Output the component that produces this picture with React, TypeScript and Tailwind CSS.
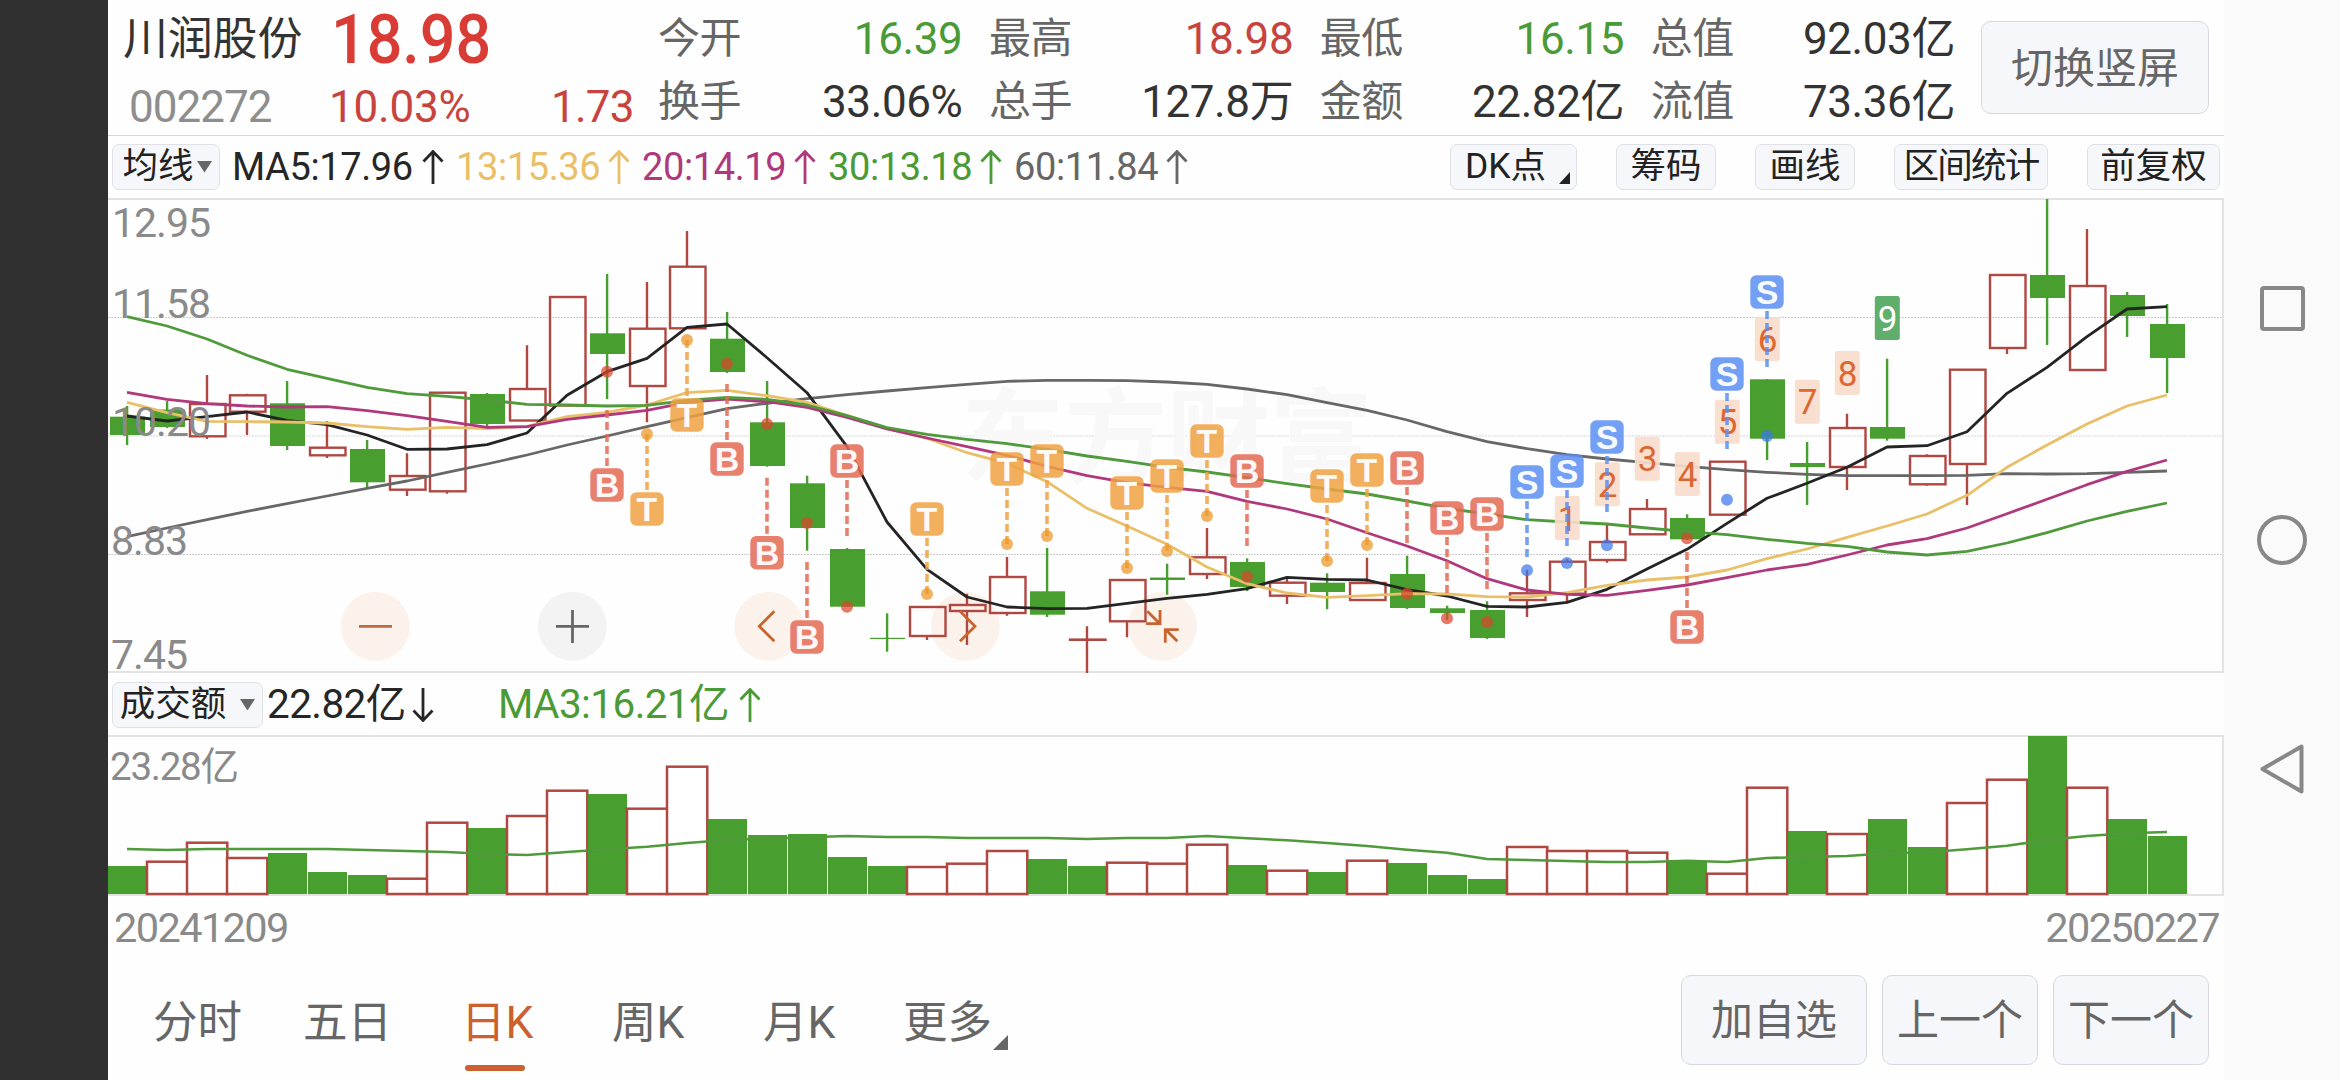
import React from "react";

type Candle = [kind: "g" | "r", high: number, top: number, bottom: number, low: number];

const cx = (i: number) => 127 + 40 * i;

const candles: Candle[] = [
  ["g", 406, 416.7, 435, 445], ["g", 401, 409.5, 427, 428], ["r", 375, 404, 436.3, 439], ["r", 393.7, 395.3, 411.7, 435],
  ["g", 381, 403.3, 446, 450], ["r", 421, 447.7, 455.3, 458], ["g", 440, 449, 482.3, 487.7], ["r", 453.3, 476, 489.7, 496],
  ["r", 392.3, 392.7, 491.3, 493.7], ["g", 393, 394, 424, 430], ["r", 345.3, 389, 420.5, 421], ["r", 297, 297, 405.5, 405.5],
  ["g", 274, 333.3, 354, 399], ["r", 282, 328.7, 386, 422.3], ["r", 231, 266.7, 328.3, 328.3], ["g", 312, 338.7, 372, 373],
  ["g", 381, 422.3, 466, 466.7], ["g", 475.7, 483.3, 528, 550.7], ["g", 548, 549, 606.7, 606.7], ["g", 613.3, 637.8, 639, 651.7],
  ["r", 606.5, 607, 636, 640], ["r", 593.7, 605, 611, 645], ["r", 557, 577, 613, 615.7], ["g", 548, 591.3, 614.7, 617],
  ["r", 626.3, 639.6, 639.8, 673], ["r", 580, 580, 621.3, 637.3], ["g", 563.7, 577.5, 580, 594.7], ["r", 528, 557.3, 574, 579],
  ["g", 558.3, 562, 587, 591], ["r", 578.3, 582.7, 595.7, 604], ["g", 573.3, 582.7, 592, 609.3], ["r", 557.7, 583, 600, 600],
  ["g", 555.7, 574, 608, 609], ["g", 605.7, 608.3, 613, 620], ["g", 601.3, 610, 638, 639], ["r", 570, 593.3, 600, 617],
  ["r", 559, 561.7, 593.7, 603.3], ["r", 525, 542, 560, 562.7], ["r", 499, 509, 534.3, 534.3], ["g", 514.3, 518, 539.3, 540],
  ["r", 461.7, 461.7, 514.7, 514.7], ["g", 379, 379.3, 438.7, 460], ["g", 442, 463, 467, 505], ["r", 413.7, 428, 467, 490],
  ["g", 358.7, 427, 438.7, 440.7], ["r", 454.3, 456, 484.3, 485.7], ["r", 369.7, 369.7, 464, 505], ["r", 275, 275, 348, 354],
  ["g", 199, 275, 298, 345], ["r", 229, 286, 370, 370], ["g", 292, 295, 316, 337], ["g", 304, 324, 358, 393],
];

const ma5 = [416, 421, 416.7, 412, 420.3, 424.7, 435, 449.3, 449, 444.7, 433, 395.3, 371.7, 358.3, 327.3, 324, 357.7, 392.7, 446.7, 522, 569.3, 597, 607, 608.7, 608.3, 603.3, 598.3, 594.3, 588.7, 577.3, 579.3, 580, 589.7, 596, 606.3, 607, 602.3, 589.3, 569, 549.3, 523.3, 498.3, 483.3, 467.2, 447, 445.7, 431.7, 393.3, 367.3, 336.7, 309, 306.7];
const ma13 = [402.3, 412.7, 421.3, 421.7, 422, 423, 426.7, 429.3, 427.3, 428.7, 426.3, 416.7, 412.3, 405, 392.7, 390.3, 395.7, 402.3, 415.7, 428.3, 438.3, 452.7, 463.3, 481.7, 508.3, 526, 544.3, 567, 583.7, 593, 597.3, 595.7, 593.7, 594, 596.7, 597, 592.7, 585.3, 580, 577, 570, 558.7, 549, 537.3, 526, 514, 495.3, 467.3, 445, 424, 406, 395];
const ma20 = [392.3, 399.3, 403.7, 406, 407, 406.7, 410.7, 415.7, 421.3, 427.3, 426.7, 419.3, 415, 410.3, 402.3, 399, 401.7, 407.3, 417.3, 429, 438, 446.7, 455.3, 466.3, 475.7, 482.7, 487.3, 491.3, 501.3, 509, 519, 532.7, 546, 560.7, 578.7, 590, 594.3, 595.3, 590.3, 585, 577.7, 570, 564.3, 555, 545, 538.7, 528, 513.7, 499.3, 484.7, 471.3, 460];
const ma30 = [316.7, 326, 339, 355.3, 369.3, 378.3, 387.3, 393.7, 396.3, 400, 404.3, 405, 406, 405.3, 400.3, 397.3, 399.3, 405, 415.7, 427.7, 434.3, 439.3, 443.7, 449.3, 456, 461.3, 467.3, 472, 477.7, 483.7, 489, 494, 501, 508.3, 514, 519.7, 522, 524, 528, 531.7, 534.7, 539.3, 543.3, 546.3, 552, 555, 551.3, 543, 532.7, 521, 511.3, 503];
const ma60 = [536.7, 528, 519.7, 511.3, 503.7, 496, 488.3, 481, 472.3, 464, 455, 445, 436, 426.7, 417.7, 408.7, 403.3, 398.7, 394.7, 391, 387.7, 384.3, 381.3, 380.3, 380.3, 380.7, 382, 384.3, 389, 394.7, 402.7, 410.3, 420, 431.7, 441.7, 448.7, 454.7, 459, 462.7, 466.3, 469.7, 472.3, 474.3, 475.7, 475.7, 475.7, 475.3, 473.7, 474, 473.7, 472.3, 471];

const volumeKinds = "grrrgggrrgrrgrrgggggrrrggrrrgrgrgggrrrrgrrgrggrrgrgg";
const volumeTops = [866, 861.7, 842.7, 858, 853, 872, 875, 878.7, 822.7, 828, 816, 790.7, 794, 808.7, 766.7, 819, 835, 834, 857, 866, 867, 863.7, 851, 859, 866, 862.7, 863.7, 844.7, 865, 870.7, 872, 860.7, 863, 875, 879, 847, 851, 851, 852.7, 862, 873.7, 787.7, 831, 834, 819, 847, 803, 779.7, 736, 787.7, 819, 836];
const volumeMa = [849, 850, 849, 849, 849, 849, 850, 851, 852, 854, 855, 852, 849.3, 846.7, 843, 840, 838.7, 837.3, 836, 837, 837, 838, 838, 838, 839, 838, 838, 836, 838.3, 840.3, 843, 846, 849.7, 852.7, 859, 860, 861, 862, 862, 860.7, 862, 858, 857, 856, 853.3, 852.3, 849.3, 845.7, 840, 836, 833.3, 832];

type Signal = [letter: "B" | "T" | "S", index: number, badgeY: number, dotY: number, below?: boolean];
const signals: Signal[] = [
  ["B", 12, 485, 371.7, true], ["T", 13, 509, 434, true], ["T", 14, 415, 340, true], ["B", 15, 459, 363.7, true],
  ["B", 16, 552.7, 424, true], ["B", 17, 637, 523, true], ["B", 18, 461, 606.7], ["T", 20, 519, 594], ["T", 22, 469, 544],
  ["T", 23, 461, 536], ["T", 25, 493, 568], ["T", 26, 476, 551], ["T", 27, 441, 516], ["B", 28, 471, 576.7],
  ["T", 30, 486, 561], ["T", 31, 470, 545], ["B", 32, 468, 593.7], ["B", 33, 518, 618.3], ["B", 34, 514, 622],
  ["S", 35, 482, 570.3], ["S", 36, 471, 563], ["S", 37, 437, 545.3], ["B", 39, 627, 538.3, true], ["S", 40, 374, 499.7],
  ["S", 41, 292, 436],
];
const signalColor = { B: "#e46a55", T: "#f0a243", S: "#5b8ff2" };
const dotColor = { B: "#dc452e", T: "#ec9526", S: "#3d77ea" };

const counts: [number, number, number][] = [
  [1, 36, 518], [2, 37, 484.3], [3, 38, 458.7], [4, 39, 474], [5, 40, 421.7], [6, 41, 339], [7, 42, 401.7], [8, 43, 373], [9, 44, 318],
];

const axis: [string, number, number][] = [
  ["12.95", 112, 236.7], ["11.58", 112, 317.5], ["10.20", 112, 436], ["8.83", 111, 555], ["7.45", 111, 669],
];

const points = (ys: number[]) => ys.map((y, i) => `${cx(i)},${y}`).join(" ");

function Line({ ys, color, width = 2.8 }: { ys: number[]; color: string; width?: number }) {
  return <polyline points={points(ys)} fill="none" stroke={color} strokeWidth={width} strokeLinejoin="round" />;
}

function PriceChart() {
  return (
    <svg className="block h-[476px] w-[2116px]" viewBox="108 198 2116 476">
      <path d="M108 317.5H2222M108 554.5H2222" stroke="#cdcdcd" strokeWidth="1" strokeDasharray="2 1" />
      <path d="M108 436H2222" stroke="#e4e4e4" strokeWidth="1.6" strokeDasharray="2 1" />
      <text x="961" y="475" fontSize="103" fontWeight="700" fill="#f8f8f8" textLength="412" fontFamily="'Noto Sans CJK SC'">东方财富</text>
      <circle cx="375.3" cy="626.3" r="34.5" fill="#fcf2ec" />
      <circle cx="572.3" cy="626.3" r="34.5" fill="#f3f3f3" />
      <circle cx="768.7" cy="626.3" r="34.5" fill="#fcf2ec" />
      <circle cx="965.5" cy="626.3" r="34.5" fill="#fcf2ec" />
      <circle cx="1162.5" cy="626.3" r="34.5" fill="#fcf2ec" />
      <path d="M108 199H2223V672H108" fill="none" stroke="#e3e3e3" strokeWidth="2" />

      {candles.map(([kind, high, top, bottom, low], i) => {
        const x = cx(i);
        return kind === "g" ? (
          <g key={i} fill="#489e2e">
            <rect x={x - 1.1} y={high} width="2.4" height={low - high} />
            <rect x={x - 17} y={top} width="35" height={bottom - top} />
          </g>
        ) : (
          <g key={i} fill="none" stroke="#b04842" strokeWidth="2.4">
            <path d={`M${x} ${high}V${top}M${x} ${bottom}V${low}`} />
            <rect x={x - 17} y={top} width="35.5" height={bottom - top} />
          </g>
        );
      })}

      <Line ys={ma60} color="#676767" />
      <Line ys={ma5} color="#242424" />
      <Line ys={ma13} color="#e9bf68" />
      <Line ys={ma20} color="#b0387c" />
      <Line ys={ma30} color="#4f9a3a" />

      {counts.map(([n, i, y]) => (
        <g key={n}>
          <rect x={cx(i) - 12.2} y={y - 22} width="25" height="44" rx="2.5" fill={n === 9 ? "#5fae6b" : "#f8dccb"} fillOpacity={n === 9 ? 1 : 0.92} />
          <text x={cx(i) + 0.5} y={y + 12.5} textAnchor="middle" fontSize="35" fill={n === 9 ? "#ffffff" : "#db6733"}>{n}</text>
        </g>
      ))}

      {signals.map(([letter, i, y, dot, below]) => {
        const x = cx(i);
        return (
          <g key={i}>
            <path d={below ? `M${x} ${y - 19}v-56` : `M${x} ${y + 19}v56`} stroke={signalColor[letter]} strokeOpacity="0.85" strokeWidth="3.6" strokeDasharray="8 4" />
            <circle cx={x} cy={dot} r="6" fill={dotColor[letter]} fillOpacity="0.72" />
            <rect x={x - 16.7} y={y - 16.7} width="33.4" height="33.4" rx="6" fill={signalColor[letter]} fillOpacity="0.85" />
            <text x={x} y={y + 12} textAnchor="middle" fontSize="34" fontWeight="700" fill="#fff" fillOpacity="0.95" fontFamily="'Liberation Sans'">{letter}</text>
          </g>
        );
      })}

      {axis.map(([label, x, y]) => (
        <text key={label} x={x} y={y} fontSize="41" fill="#8a8a8a" textLength={label.length === 5 ? 99 : 77}>{label}</text>
      ))}

      <g fill="none" stroke="#c8642f" strokeWidth="2.8">
        <path d="M359 626.3h33" stroke="#bf6a3d" />
        <path d="M556 626.3h33M572.5 610v33" stroke="#666" />
        <path d="M774.3 611.3l-15 15 15 15M960 611.3l15 15-15 15" />
        <path d="M1147.3 611.3l12 12M1146 623.7h14v-13.7M1177.3 641.3l-12-12M1178.7 629.7h-13.4v13" />
      </g>
    </svg>
  );
}

function VolumeChart() {
  return (
    <svg className="block h-[162px] w-[2116px]" viewBox="108 735 2116 162">
      <path d="M108 736H2223V895H108" fill="none" stroke="#e3e3e3" strokeWidth="2" />
      {volumeTops.map((top, i) =>
        volumeKinds[i] === "g" ? (
          <rect key={i} x={cx(i) - 19} y={top} width="39" height={894 - top} fill="#489e2e" />
        ) : (
          <rect key={i} x={cx(i) - 20} y={top} width="40.3" height={894 - top} fill="#fff" stroke="#b04842" strokeWidth="2.5" />
        ),
      )}
      <Line ys={volumeMa} color="#4f9a3a" width={2.6} />
      <text x="110" y="779.7" fontSize="38.5" fill="#8a8a8a" textLength="129">23.28亿</text>
    </svg>
  );
}

function Arrow({ down = false }: { down?: boolean }) {
  return (
    <svg className="h-[34px] w-[22px] shrink-0" viewBox="0 0 22 34" fill="none" stroke="currentColor" strokeWidth="2.8">
      <path d={down ? "M11 0v32M1.5 22.5l9.5 10 9.5-10" : "M11 34V2M1.5 11.500l9.500-10 9.500 10"} />
    </svg>
  );
}

function Stat({ label, value, tone }: { label: string; value: string; tone: string }) {
  return (
    <div className="flex h-[63px] items-center justify-between whitespace-nowrap">
      <span className="text-[42px] tracking-[-0.5px] text-[#666]">{label}</span>
      <span className={`text-[44px] tracking-[-0.4px] ${tone}`}>{value}</span>
    </div>
  );
}

function MaItem({ text, color, width }: { text: string; color: string; width: string }) {
  return (
    <div className={`flex items-center justify-between text-[38px] ${width} ${color}`}>
      <span className="whitespace-nowrap tracking-[-0.4px]">{text}</span>
      <Arrow />
    </div>
  );
}

function Chip({ children, className }: { children: React.ReactNode; className: string }) {
  return (
    <button className={`flex h-[46px] shrink-0 items-center justify-center whitespace-nowrap rounded-[7px] border border-[#dfe1e6] bg-[#f6f7fa] text-[35.5px] text-[#222] ${className}`}>
      {children}
    </button>
  );
}

function PageButton({ children, className }: { children: React.ReactNode; className: string }) {
  return (
    <button className={`flex items-center justify-center whitespace-nowrap rounded-[10px] border border-[#d5d8df] bg-[#f6f7fa] pt-[2px] text-[42px] text-[#666] ${className}`}>
      {children}
    </button>
  );
}

function Caret() {
  return <svg className="h-[11.500px] w-[15px]" viewBox="0 0 15 11.5" fill="#666"><path d="M0 0h15L7.500 11.500z" /></svg>;
}

const stats = [
  [["今开", "16.39", "text-[#4a9a35]"], ["换手", "33.06%", "text-[#333]"]],
  [["最高", "18.98", "text-[#c8433d]"], ["总手", "127.8万", "text-[#333]"]],
  [["最低", "16.15", "text-[#4a9a35]"], ["金额", "22.82亿", "text-[#333]"]],
  [["总值", "92.03亿", "text-[#333]"], ["流值", "73.36亿", "text-[#333]"]],
];

export default function App() {
  return (
    <div className="flex h-[1080px] w-[2340px] overflow-hidden bg-[#fefefe] font-[Roboto,'Noto_Sans_CJK_SC',sans-serif] leading-none">
      <div className="w-[108px] shrink-0 bg-[#303030]" />

      <main className="flex w-[2116px] shrink-0 flex-col">
        <header className="flex h-[136px] border-b border-[#d6d6d6]">
          <div className="w-[550px] whitespace-nowrap">
            <div className="flex h-[78px] items-center pl-[15px]">
              <span className="w-[208px] text-[45px] tracking-[-0.2px] text-[#333]">川润股份</span>
              <span className="origin-left scale-x-[0.91] text-[69px] font-medium text-[#d83c34]">18.98</span>
            </div>
            <div className="flex h-[58px] items-center pl-[21px] text-[44px] tracking-[-1px]">
              <span className="w-[200px] text-[#8e8e8e]">002272</span>
              <span className="w-[222px] tracking-[-0.2px] text-[#c8433d]">10.03%</span>
              <span className="tracking-[-0.8px] text-[#c8433d]">1.73</span>
            </div>
          </div>
          <div className="grid w-[1297px] grid-cols-4 gap-x-[26.5px] pt-[7px]">
            {stats.map((column, c) => (
              <div key={c}>
                {column.map(([label, value, tone]) => <Stat key={label} label={label} value={value} tone={tone} />)}
              </div>
            ))}
          </div>
          <PageButton className="ml-[26px] mt-[21px] h-[93px] w-[228px]">切换竖屏</PageButton>
        </header>

        <div className="flex h-[62px] items-center pl-[4px] pr-[4px]">
          <Chip className="mr-[12px] w-[108px] gap-[3px] pl-[2px]">均线<Caret /></Chip>
          <div className="flex gap-[12px]">
            <MaItem text="MA5:17.96" color="text-[#262626]" width="w-[212px]" />
            <MaItem text="13:15.36" color="text-[#e9bf68]" width="w-[174px]" />
            <MaItem text="20:14.19" color="text-[#b0387c]" width="w-[174px]" />
            <MaItem text="30:13.18" color="text-[#4a9a35]" width="w-[174px]" />
            <MaItem text="60:11.84" color="text-[#666]" width="w-[174px]" />
          </div>
          <div className="ml-auto flex gap-[39px]">
            <Chip className="relative w-[127px] pr-[16px]">
              DK点
              <svg className="absolute bottom-[5px] right-[6px] h-[12px] w-[11px]" viewBox="0 0 11 12" fill="#222"><path d="M11 0v12H0z" /></svg>
            </Chip>
            <Chip className="w-[100px]">筹码</Chip>
            <Chip className="w-[100px]">画线</Chip>
            <Chip className="w-[154px] tracking-[-1.8px]">区间统计</Chip>
            <Chip className="w-[133px]">前复权</Chip>
          </div>
        </div>

        <PriceChart />

        <div className="flex h-[61px] items-center pl-[4px] text-[40.500px] tracking-[-0.6px]">
          <Chip className="mr-[4px] w-[151px] gap-[14px] tracking-normal">成交额<Caret /></Chip>
          <div className="flex w-[167px] items-center justify-between text-[#262626]"><span>22.82亿</span><Arrow down /></div>
          <div className="ml-[64px] flex w-[263px] items-center justify-between text-[#4a9a35]"><span>MA3:16.21亿</span><Arrow /></div>
        </div>

        <VolumeChart />

        <div className="flex h-[62px] items-center justify-between pl-[6px] pr-[5px] text-[41.500px] tracking-[-1.600px] text-[#8a8a8a]">
          <span>20241209</span>
          <span>20250227</span>
        </div>

        <footer className="flex flex-1 items-start pt-[16px]">
          <nav className="flex h-[98px] items-start whitespace-nowrap pl-[45px] pt-[26px] text-[44.500px] text-[#666]">
            <span className="w-[150px]">分时</span>
            <span className="w-[161px]">五日</span>
            <span className="relative -left-[3px] w-[148px] text-[#cc6130]">
              日K
              <i className="absolute left-[4px] top-[64px] h-[6px] w-[60px] rounded-full bg-[#cc6130]" />
            </span>
            <span className="w-[151px]">周K</span>
            <span className="w-[140px]">月K</span>
            <span className="flex">
              更多
              <svg className="ml-[1px] mt-[34px] h-[15px] w-[15px]" viewBox="0 0 15 15" fill="#666"><path d="M15 0v15H0z" /></svg>
            </span>
          </nav>
          <div className="ml-auto flex gap-[15px] pr-[15px]">
            <PageButton className="h-[90px] w-[186px]">加自选</PageButton>
            <PageButton className="h-[90px] w-[156px]">上一个</PageButton>
            <PageButton className="h-[90px] w-[156px]">下一个</PageButton>
          </div>
        </footer>
      </main>

      <aside className="flex w-[116px] flex-col items-center bg-[#fafafa] pt-[286px]">
        <div className="h-[45px] w-[45px] rounded-[4px] border-4 border-[#888]" />
        <div className="mt-[184px] h-[50px] w-[50px] rounded-full border-4 border-[#888]" />
        <svg className="mt-[179px] h-[50px] w-[44px]" viewBox="0 0 44 50" fill="none" stroke="#888" strokeWidth="4" strokeLinejoin="round"><path d="M41.500 2.500v45L2.500 25z" /></svg>
      </aside>
    </div>
  );
}
